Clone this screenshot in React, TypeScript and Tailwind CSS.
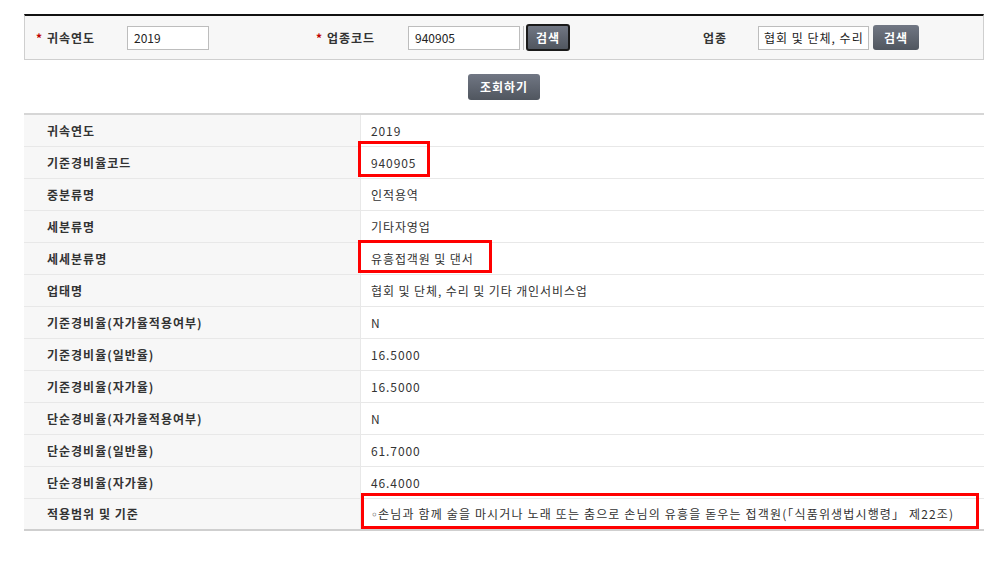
const font = "font-['Noto_Sans_CJK_KR',sans-serif]";

const rows: { label: string; value: React.ReactNode; mark?: string }[] = [
  { label: "귀속연도", value: "2019" },
  { label: "기준경비율코드", value: "940905", mark: "left-[-3px] top-[-6px] w-[72px] h-[36px]" },
  { label: "중분류명", value: "인적용역" },
  { label: "세분류명", value: "기타자영업" },
  { label: "세세분류명", value: "유흥접객원 및 댄서", mark: "left-[-3px] top-[-3px] w-[134px] h-[33px]" },
  { label: "업태명", value: "협회 및 단체, 수리 및 기타 개인서비스업" },
  { label: "기준경비율(자가율적용여부)", value: "N" },
  { label: "기준경비율(일반율)", value: "16.5000" },
  { label: "기준경비율(자가율)", value: "16.5000" },
  { label: "단순경비율(자가율적용여부)", value: "N" },
  { label: "단순경비율(일반율)", value: "61.7000" },
  { label: "단순경비율(자가율)", value: "46.4000" },
  {
    label: "적용범위 및 기준",
    value: (
      <span className="tracking-[1.15px]">
        <span className="font-['DejaVu_Sans',sans-serif] text-[12px] text-[#333] tracking-normal">◦</span>
        손님과 함께 술을 마시거나 노래 또는 춤으로 손님의 유흥을 돋우는 접객원(「식품위생법시행령」 제22조)
      </span>
    ),
    mark: "left-0 top-[-6px] w-[618px] h-[36px]",
  },
];

function Btn({ children, className = "" }: { children: React.ReactNode; className?: string }) {
  return (
    <button
      className={`flex items-center justify-center rounded-[3px] bg-gradient-to-b from-[#717784] to-[#50565f] text-[12px] font-bold text-white tracking-[1px] ${className}`}
    >
      {children}
    </button>
  );
}

function Field({ label, star }: { label: string; star?: boolean }) {
  return (
    <div className="flex items-center text-[12px] font-bold text-[#333] tracking-[1px]">
      {star && <span className="w-[11px] text-[#c00000]">*</span>}
      <span>{label}</span>
    </div>
  );
}

export default function App() {
  return (
    <div className={`${font} w-[1001px] min-h-[568px] bg-white pt-[14px] pl-[24px]`}>
      {/* 검색 조건 */}
      <div className="w-[960px] h-[46px] flex items-center bg-[#f7f7f7] border-t-2 border-t-[#111] border-x border-b border-x-[#cfcfcf] border-b-[#cfcfcf]">
        <div className="w-[102px] pl-[11px]">
          <Field label="귀속연도" star />
        </div>
        <div className="w-[82px] h-[24px] flex items-center border border-[#bdbdbd] bg-white pl-[6px] text-[12px] text-[#222]">2019</div>
        <div className="w-[107px]" />
        <div className="w-[92px]">
          <Field label="업종코드" star />
        </div>
        <div className="w-[112px] h-[24px] flex items-center border border-[#bdbdbd] bg-white pl-[6px] text-[12px] text-[#222]">940905</div>
        <div className="ml-[3px] w-[1px] h-[24px] bg-[#bdbdbd]" />
        <Btn className="ml-[2px] w-[44px] h-[27px] border-2 border-[#1a1a1a]">검색</Btn>
        <div className="w-[133px]" />
        <div className="w-[55px]">
          <Field label="업종" />
        </div>
        <div className="w-[111px] h-[24px] flex items-center border border-[#bdbdbd] bg-white pl-[5px] text-[12px] text-[#222] tracking-[1px] whitespace-nowrap">
          협회 및 단체, 수리
        </div>
        <Btn className="ml-[4px] w-[46px] h-[25px]">검색</Btn>
      </div>

      <div className="w-[960px] flex justify-center mt-[14px]">
        <Btn className="w-[72px] h-[26px]">조회하기</Btn>
      </div>

      {/* 조회 결과 */}
      <div className="w-[960px] mt-[13px] border-t-2 border-[#d6d6d6]">
        {rows.map((r, i) => (
          <div
            key={r.label}
            className={`flex h-[32px] ${i === rows.length - 1 ? "border-b-2 border-[#cfcfcf]" : "border-b border-[#e8e8e8]"}`}
          >
            <div className="w-[337px] shrink-0 flex items-center bg-[#f7f7f7] border-r border-[#e8e8e8] pl-[23px] text-[12px] font-bold text-[#333] tracking-[1px]">
              {r.label}
            </div>
            <div className="relative flex-1 flex items-center pl-[10px] text-[12px] text-[#333] tracking-[0.9px] whitespace-nowrap">
              {r.value}
              {r.mark && <div className={`absolute border-[3px] border-[#ff0000] ${r.mark}`} />}
            </div>
          </div>
        ))}
      </div>
    </div>
  );
}
